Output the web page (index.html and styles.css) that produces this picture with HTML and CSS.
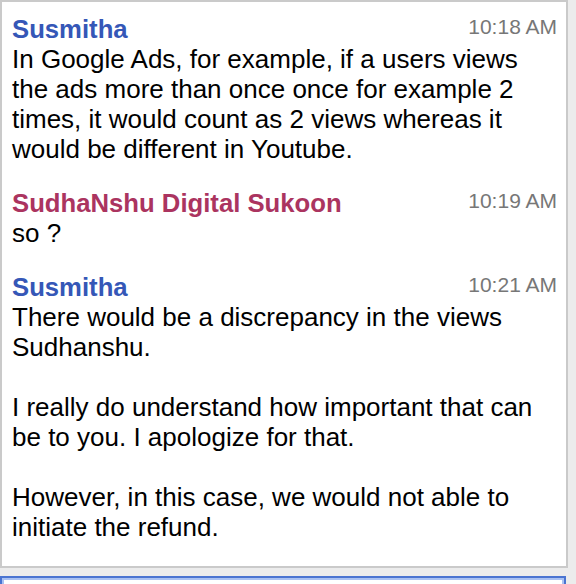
FILE: index.html
```html
<!DOCTYPE html>
<html>
<head>
<meta charset="utf-8">
<link rel="stylesheet" href="styles.css">
</head>
<body>
<div class="panel">
  <div class="msg">
    <div class="head"><span class="name blue">Susmitha</span><span class="time">10:18 AM</span></div>
    <div class="text">In Google Ads, for example, if a users views the ads more than once once for example 2 times, it would count as 2 views whereas it would be different in Youtube.</div>
  </div>
  <div class="msg">
    <div class="head"><span class="name pink">SudhaNshu Digital Sukoon</span><span class="time">10:19 AM</span></div>
    <div class="text">so ?</div>
  </div>
  <div class="msg">
    <div class="head"><span class="name blue">Susmitha</span><span class="time">10:21 AM</span></div>
    <div class="text">There would be a discrepancy in the views Sudhanshu.<br><br>I really do understand how important that can be to you. I apologize for that.<br><br>However, in this case, we would not able to initiate the refund.</div>
  </div>
</div>
<div class="input"></div>
</body>
</html>
```
FILE: styles.css
```css
html, body {
  margin: 0;
  padding: 0;
  background: #ececec;
  font-family: "Liberation Sans", Arial, Helvetica, sans-serif;
}
.panel {
  box-sizing: border-box;
  width: 568px;
  height: 568px;
  border: 2px solid #cacaca;
  background: #fff;
  padding: 12px 9px 0 10px;
  overflow: hidden;
}
.msg {
  margin-bottom: 24px;
}
.head {
  display: flex;
  justify-content: space-between;
  align-items: flex-start;
  height: 30px;
}
.name {
  font-weight: bold;
  font-size: 25.7px;
  line-height: 30px;
}
.blue { color: #3557b7; }
.pink { color: #ab3460; }
.time {
  font-size: 21px;
  line-height: 25px;
  color: #777;
}
.text {
  font-size: 26px;
  line-height: 30px;
  color: #000;
  padding-right: 8px;
}
.input {
  margin-top: 8px;
  width: 566px;
  height: 20px;
  box-sizing: border-box;
  border: 2px solid #4a74d1;
  box-shadow: inset 0 0 0 2px #a9c1f2;
  background: #fff;
}
```
